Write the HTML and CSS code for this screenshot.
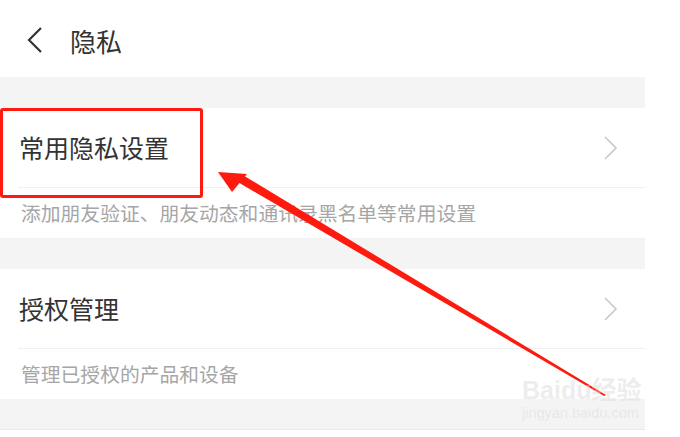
FILE: index.html
```html
<!DOCTYPE html>
<html>
<head>
    <title>隐私</title>
    <meta name="viewport" content="width=device-width, initial-scale=1.0">
    <link rel="stylesheet" href="styles.css">
</head>
<body>
    <div class="page">
        <!-- Header -->
        <div class="header">
            <svg class="back" width="18" height="28" viewBox="0 0 18 28">
                <path d="M15 2 L3 14 L15 26" fill="none" stroke="#333" stroke-width="2.2"/>
            </svg>
            <span class="header-title">隐私</span>
        </div>

        <div class="gap"></div>

        <!-- Common privacy settings -->
        <div class="card">
            <div class="row">
                <span class="row-title">常用隐私设置</span>
                <svg class="more" width="16" height="26" viewBox="0 0 16 26">
                    <path d="M2 2 L13 13 L2 24" fill="none" stroke="#c8c8c8" stroke-width="1.6"/>
                </svg>
            </div>
            <div class="row-desc">添加朋友验证、朋友动态和通讯录黑名单等常用设置</div>
        </div>

        <div class="gap"></div>

        <!-- Authorization -->
        <div class="card">
            <div class="row">
                <span class="row-title">授权管理</span>
                <svg class="more" width="16" height="26" viewBox="0 0 16 26">
                    <path d="M2 2 L13 13 L2 24" fill="none" stroke="#c8c8c8" stroke-width="1.6"/>
                </svg>
            </div>
            <div class="row-desc">管理已授权的产品和设备</div>
        </div>

        <div class="gap gap-last"></div>
    </div>

    <!-- Annotation overlay -->
    <div class="mark-box"></div>
    <svg class="arrow" width="680" height="437" viewBox="0 0 680 437">
        <polygon points="218,172 247,174 232,192" fill="#ff1a0f"/>
        <polygon points="236,181 241,174 606,395 604,396" fill="#ff1a0f"/>
    </svg>
    <div class="watermark">
        <div class="wm-big">Baidu经验</div>
        <div class="wm-small">jingyan.baidu.com</div>
    </div>
</body>
</html>
```

FILE: styles.css
```css
body {
    margin: 0;
    background-color: #fff;
    font-family: "Noto Sans CJK SC", "Noto Sans", sans-serif;
    color: #333;
}

.page {
    width: 645px;
    background-color: #f4f4f4;
}

.header {
    height: 77px;
    background-color: #fff;
    display: flex;
    align-items: center;
    padding-left: 26px;
    box-sizing: border-box;
}

.back {
    margin-top: 3px;
}

.header-title {
    font-size: 26px;
    margin-left: 26px;
    margin-top: 4px;
    line-height: 1;
}

.gap {
    height: 31px;
}

.gap-last {
    height: 30px;
    border-bottom: 1px solid #e8e8e8;
}

.card {
    background-color: #fff;
}

.row {
    height: 79px;
    margin-left: 18px;
    border-bottom: 1px solid #f0f0f0;
    display: flex;
    align-items: center;
    justify-content: space-between;
    padding-right: 26px;
}

.row-title {
    font-size: 25px;
    line-height: 1;
    margin-left: 1px;
}

.row-desc {
    height: 50px;
    line-height: 50px;
    padding-left: 21px;
    font-size: 19.8px;
    color: #a6a6a6;
}

/* Red annotation */
.mark-box {
    position: absolute;
    left: 0;
    top: 108px;
    width: 197px;
    height: 84px;
    border: 3px solid #ff1a0f;
    border-radius: 3px;
}

.arrow {
    position: absolute;
    left: 0;
    top: 0;
}

.watermark {
    position: absolute;
    left: 522px;
    top: 376px;
    white-space: nowrap;
    color: rgba(215, 215, 215, 0.45);
    font-family: "Liberation Sans", "Noto Sans CJK SC", sans-serif;
}

.wm-big {
    font-size: 25px;
    line-height: 28px;
    font-weight: bold;
}

.wm-small {
    font-size: 14.5px;
    line-height: 18px;
}
```
